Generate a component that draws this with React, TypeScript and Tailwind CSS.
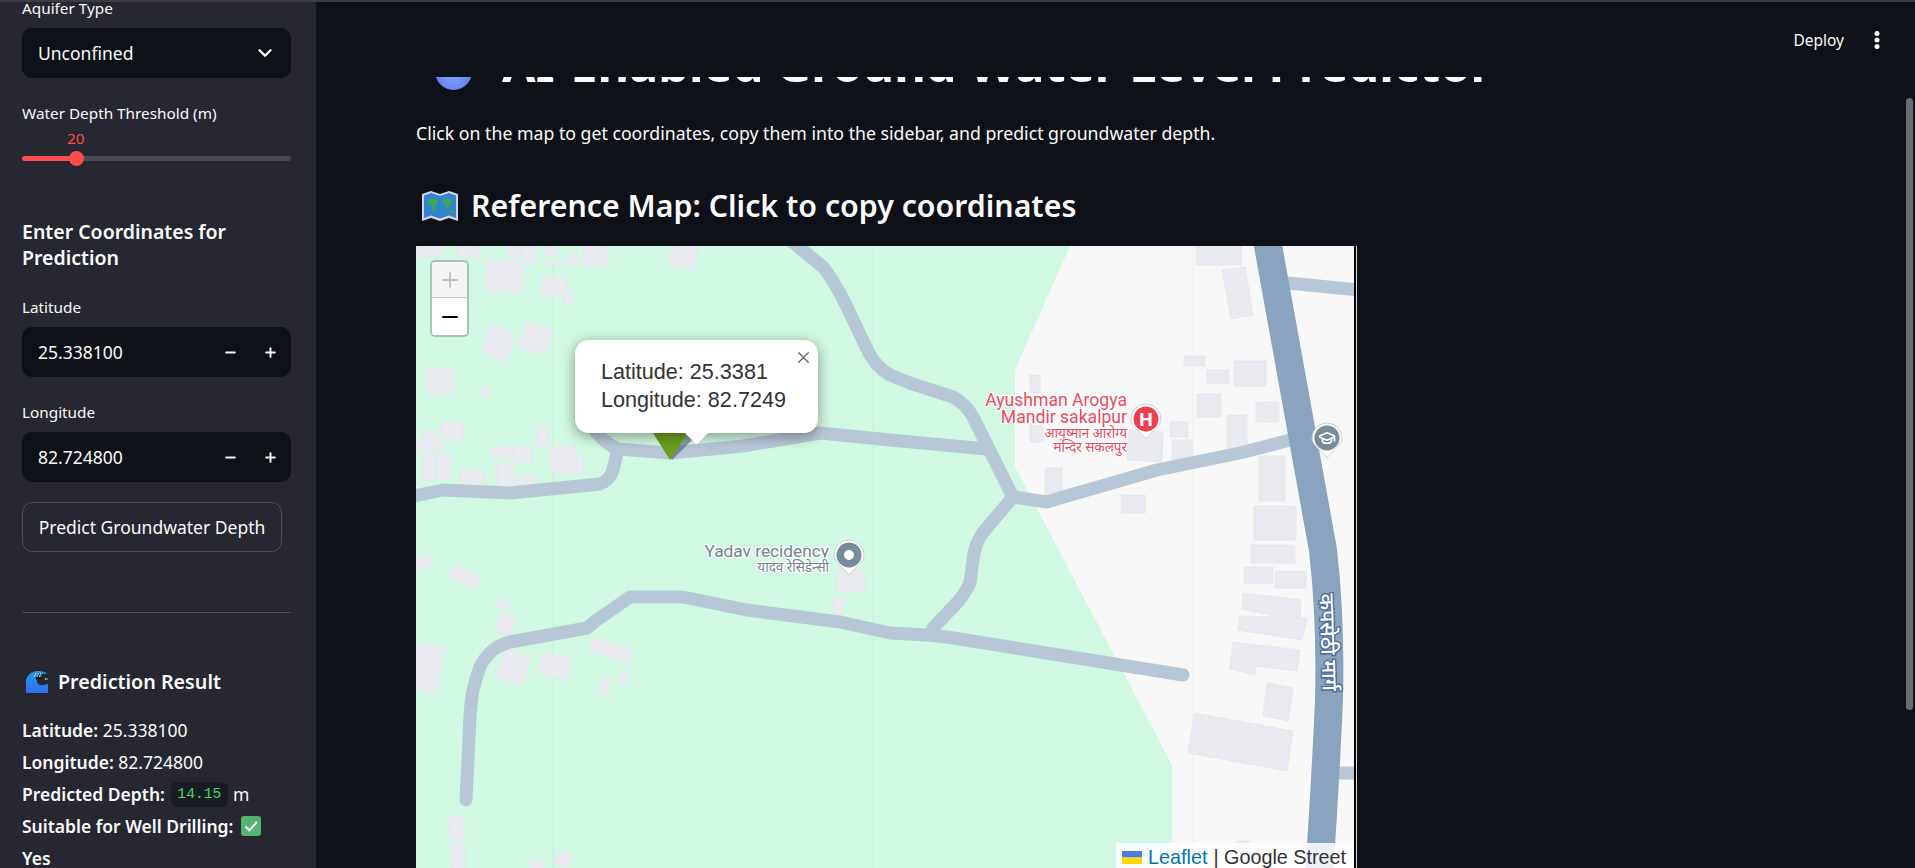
import { ChevronDown, GraduationCap, Minus, Plus, X } from "lucide-react";

// map drawing uses page coordinates through the viewBox, so the values read off the screenshot go in as they are
const rect = (x1: number, x2: number, y1: number, y2: number) =>
  `${x1},${y1} ${x2},${y1} ${x2},${y2} ${x1},${y2}`;

const buildings = [
  rect(416, 443, 246, 257),
  rect(457, 480, 246, 258),
  rect(507, 520, 246, 258),
  rect(523, 536, 246, 263),
  rect(545, 557, 246, 256),
  rect(545, 565, 260, 265),
  rect(568, 578, 253, 265),
  rect(583, 608, 246, 267),
  "672,246 698,246 694,270 668,265",
  rect(486, 523, 260, 292),
  rect(541, 567, 277, 296),
  rect(564, 573, 292, 305),
  "490,323 515,335 505,365 481,350",
  "527,322 553,330 545,355 518,347",
  rect(427, 454, 369, 395),
  "483,387 492,392 489,398 478,393",
  rect(441, 463, 422, 440),
  rect(423, 437, 430, 440),
  rect(416, 442, 440, 450),
  rect(423, 434, 452, 480),
  rect(436, 451, 453, 479),
  rect(460, 484, 470, 485),
  rect(491, 514, 446, 458),
  rect(514, 532, 446, 463),
  rect(497, 514, 463, 487),
  rect(516, 538, 476, 485),
  rect(537, 548, 426, 447),
  rect(550, 576, 446, 473),
  rect(576, 583, 457, 474),
  rect(1196, 1241, 246, 265),
  "1222,270 1245,267 1253,315 1231,319",
  rect(1184, 1205, 356, 366),
  rect(1207, 1229, 370, 383),
  rect(1234, 1266, 361, 386),
  rect(1197, 1221, 394, 417),
  rect(1256, 1279, 402, 422),
  rect(1227, 1247, 415, 450),
  rect(1030, 1040, 375, 393),
  rect(1030, 1043, 425, 442),
  "1129,430 1163,432 1162,462 1127,460",
  rect(1170, 1188, 422, 437),
  rect(1172, 1192, 440, 460),
  rect(1045, 1062, 468, 497),
  rect(1121, 1145, 495, 513),
  rect(1259, 1285, 456, 501),
  rect(1254, 1296, 506, 540),
  rect(1251, 1295, 545, 563),
  rect(1244, 1273, 567, 583),
  rect(1275, 1306, 571, 588),
  "1243,593 1301,600 1300,622 1242,609",
  "1240,616 1307,618 1302,640 1238,630",
  "1233,642 1300,650 1297,671 1256,666 1255,675 1230,669",
  "1267,683 1293,688 1288,721 1263,716",
  "1195,713 1293,731 1287,771 1188,753",
  rect(416, 430, 557, 568),
  "453,566 480,575 476,589 449,578",
  "498,598 511,603 507,610 495,605",
  "500,612 516,616 510,636 495,632",
  "416,643 446,648 435,695 416,690",
  "505,649 531,656 522,685 496,677",
  "543,651 572,658 567,680 537,673",
  "592,637 632,650 628,663 588,650",
  rect(600, 610, 678, 694),
  "621,671 628,672 625,686 618,684",
  rect(449, 464, 817, 840),
  rect(451, 465, 843, 868),
  rect(530, 544, 860, 868),
  "557,852 571,854 569,867 556,866",
  rect(836, 865, 570, 591),
  rect(833, 843, 598, 615),
  rect(1237, 1249, 841, 848),
];

const roads = [
  "M410 497 L443 490 L510 493 L600 484 Q610 480 613 470 L618 449",
  "M596 432 Q606 444 618 449 L670 453 L743 446 L820 433 L890 440 L987 449",
  "M790 240 L823 267 Q835 282 847 307 L866 347 Q874 366 890 375 L910 383 L953 397 Q966 404 973 417 L1013 497",
  "M1013 497 L1047 502 L1060 498 L1157 470 L1240 453 L1290 440",
  "M1013 497 L985 530 Q975 542 973 560 L970 583 Q964 596 953 607 L933 628",
  "M466 800 L470 717 Q471 700 473 690 Q476 678 480 667 Q484 658 493 650 Q500 645 510 642 L587 628 Q596 620 607 613 L630 597 L683 597 L747 610 L840 622 L890 633 L927 635 L947 637 L1183 675",
  "M1288 283 L1360 290",
  "M1337 773 L1360 773",
];

const Drop = () => (
  <svg width="37" height="50" viewBox="0 0 37 50" className="shrink-0">
    <defs>
      <radialGradient id="drop" cx="0.5" cy="0.6" r="0.6">
        <stop offset="0" stopColor="#80b0ff" />
        <stop offset="1" stopColor="#6076f0" />
      </radialGradient>
    </defs>
    <path d="M18.5 0C24 9 37 21 37 31.5A18.5 18.5 0 0 1 0 31.5C0 21 13 9 18.5 0Z" fill="url(#drop)" />
  </svg>
);

const MapEmoji = () => (
  <svg width="36" height="30" viewBox="0 0 36 30" className="shrink-0">
    <path d="M0 3l9-3 9 3 9-3 9 3v27l-9-3-9 3-9-3-9 3z" fill="#d5d3e8" />
    <path d="M2 4.500l7-2.500 9 3 9-3 7 2.500v22.500l-7-2.500-9 3-9-3-7 2.500z" fill="#2e86d0" />
    <path d="M6 9l7-2 3 4-3 5 2 5-4-1-1-5-4-2zM21 7l7 1 3 4-3 2-2 5-3-2 1-4-4-2zM28 20l3-1 1 3-3 1z" fill="#3fa55b" />
  </svg>
);

const WaveEmoji = () => (
  <svg width="22" height="22" viewBox="0 0 22 22" className="shrink-0">
    <defs>
      <linearGradient id="wave" x1="0" y1="0" x2="0" y2="1">
        <stop offset="0" stopColor="#1f9be8" />
        <stop offset="1" stopColor="#2f6ff0" />
      </linearGradient>
    </defs>
    <path d="M0 22V11C0 4 6 0 12 0c4 0 8 1 9 3-5-1-9 1-10 5-1 4 2 7 6 6l5-1v9z" fill="url(#wave)" />
    <circle cx="13" cy="6" r="3.500" fill="#10202f" />
    <path d="M8 5h8M9 3h6M19 8h3" stroke="#cfe6f7" strokeWidth="1.500" strokeDasharray="1.500 1" />
  </svg>
);

const CheckEmoji = () => (
  <svg width="20" height="20" viewBox="0 0 20 20" className="shrink-0">
    <rect width="20" height="20" rx="3" fill="#53b36f" />
    <path d="M4.500 10.500l3.800 3.800 7.500-8.300" fill="none" stroke="#fff" strokeWidth="2" />
  </svg>
);

const NumberInput = ({ value }: { value: string }) => (
  <div className="mt-[10px] flex h-[50px] items-center rounded-[10px] bg-[#0e1117] pl-4 pr-[13px] text-[17.500px] text-[#fafafa]">
    <span className="flex-1">{value}</span>
    <Minus size={15} strokeWidth={3} className="mr-[25px]" />
    <Plus size={15} strokeWidth={3} />
  </div>
);

const MapPin = ({ x, y, fill }: { x: number; y: number; fill: string }) => (
  <g>
    <path
      d={`M${x - 15} ${y}a15 15 0 0 1 30 0c0 7-9 12-15 20c-6-8-15-13-15-20z`}
      fill="#fff"
      stroke="#c9ced3"
      strokeWidth="1"
    />
    <circle cx={x} cy={y} r="12.500" fill={fill} />
  </g>
);

const MapView = () => (
  <div className="relative h-[622px] w-[938px] shrink-0 overflow-hidden bg-[#f8f8f8]">
    <svg width="938" height="622" viewBox="416 246 938 622" className="block">
      <polygon points="416,246 1070,246 1015,370 1015,467 1172,765 1172,868 416,868" fill="#d1f8e2" />
      <path d="M553 246V868M1193 246V868M873 246V868" stroke="#8a9a9a" strokeOpacity="0.1" />
      {buildings.map((points) => (
        <polygon key={points} points={points} fill="#e8eaef" stroke="#e2e4ea" strokeWidth="0.800" />
      ))}
      {roads.map((d) => (
        <path key={d} d={d} fill="none" stroke="#b8c7d6" strokeWidth="13" strokeLinecap="round" strokeLinejoin="round" />
      ))}
      <path
        d="M1267 240L1323 550Q1331 620 1329 700Q1325 790 1319 875"
        fill="none"
        stroke="#8aa4c0"
        strokeWidth="28"
      />
      <path d="M672 460L694 438L686 433L668 452Z" fill="#33424f" fillOpacity="0.5" />
      <path d="M653 433H687L670 460Z" fill="#6a9f1e" />
      <g fontFamily="Roboto, 'Noto Sans', sans-serif" textAnchor="end" paintOrder="stroke" stroke="#fff" strokeWidth="2.500" strokeLinejoin="round">
        <g fill="#e94c5e">
          <text x="1127" y="406" fontSize="17.600">Ayushman Arogya</text>
          <text x="1127" y="423" fontSize="17.600">Mandir sakalpur</text>
          <text x="1127" y="438" fontSize="13.500">आयुष्मान आरोग्य</text>
          <text x="1127" y="452" fontSize="13.500">मन्दिर सकलपुर</text>
        </g>
        <g fill="#74858f">
          <text x="829" y="557" fontSize="17.300">Yadav recidency</text>
          <text x="829" y="572" fontSize="13.500">यादव रेसिडेन्सी</text>
        </g>
      </g>
      <MapPin x={1146} y={419} fill="#ee3f51" />
      <text x="1146" y="426" textAnchor="middle" fontSize="19" fontWeight="700" fontFamily="Roboto, sans-serif" fill="#fff">
        H
      </text>
      <MapPin x={1327} y={438} fill="#788d99" />
      <GraduationCap x={1318} y={429} width={18} height={18} stroke="#fff" strokeWidth={2.200} />
      <MapPin x={849} y={555} fill="#788d99" />
      <circle cx="849" cy="555" r="5" fill="#fff" />
      <text
        transform="translate(1332 642) rotate(88)"
        textAnchor="middle"
        y="11"
        fontSize="21"
        fontWeight="500"
        fontFamily="'Noto Sans', sans-serif"
        fill="#fff"
        stroke="#4f7099"
        strokeWidth="3"
        paintOrder="stroke"
      >
        कपसेठी मार्ग
      </text>
    </svg>

    <div className="absolute left-[14px] top-[14px] w-[39px] overflow-hidden rounded-[5px] border-2 border-[#a5c4b4]">
      <div className="flex h-[36px] items-center justify-center border-b border-[#c8c8c8] bg-[#f4f4f4] text-[#bbbbbb]">
        <Plus size={24} strokeWidth={1.800} />
      </div>
      <div className="flex h-[37px] items-center justify-center bg-white text-black">
        <Minus size={24} strokeWidth={2} />
      </div>
    </div>

    <div className="absolute left-[159px] top-[94px] h-[93px] w-[243px] rounded-[14px] bg-white shadow-[0_3px_14px_rgba(0,0,0,0.4)]">
      <div className="absolute left-[113px] top-[84px] h-[17px] w-[17px] rotate-45 bg-white" />
      <div className="relative pl-[26px] pt-[18px] font-['Liberation_Sans',sans-serif] text-[21.600px] leading-[28px] text-[#333333]">
        <div>Latitude: 25.3381</div>
        <div>Longitude: 82.7249</div>
      </div>
      <X size={19} strokeWidth={1.700} className="absolute right-[5px] top-[8px] text-[#666666]" />
    </div>

    <div className="absolute bottom-0 right-0 flex h-[25px] w-[238px] items-center bg-white/85 pl-[6px] pt-[4px] font-['Liberation_Sans',sans-serif] text-[19.800px] text-[#333333]">
      <svg width="20" height="13" viewBox="0 0 20 13" className="mr-[6px] shrink-0">
        <rect width="20" height="6.500" fill="#4c7be1" />
        <rect y="6.500" width="20" height="6.500" fill="#ffd500" />
      </svg>
      <span className="text-[#0078a8]">Leaflet</span>
      <span className="ml-[6px]">| Google Street</span>
    </div>
  </div>
);

const Sidebar = () => (
  <aside className="w-[316px] shrink-0 bg-[#262730] pl-[22px] pr-[25px] text-[#fafafa]">
    <div className="-mt-[4px] text-[15.300px] leading-[20px]">Aquifer Type</div>
    <div className="mt-[10px] flex h-[50px] items-center justify-between rounded-[10px] bg-[#0e1117] pl-4 pr-[15px] text-[17.500px]">
      <span>Unconfined</span>
      <ChevronDown size={22} strokeWidth={2.600} />
    </div>

    <div className="mt-[25px] text-[15.300px] leading-[20px]">Water Depth Threshold (m)</div>
    <div className="ml-[45px] mt-[5px] text-[15.300px] leading-[20px] text-[#ff4b4b]">20</div>
    <div className="relative mt-[8px] h-[5px] rounded-full bg-[#484953]">
      <div className="h-full w-[54px] rounded-full bg-[#ff4b4b]" />
      <div className="absolute left-[47px] top-[-5px] h-[15px] w-[15px] rounded-full bg-[#ff4b4b]" />
    </div>

    <h3 className="mt-[58px] text-[19.500px] font-semibold leading-[26px]">Enter Coordinates for Prediction</h3>

    <div className="mt-[26px] text-[15.300px] leading-[20px]">Latitude</div>
    <NumberInput value="25.338100" />
    <div className="mt-[25px] text-[15.300px] leading-[20px]">Longitude</div>
    <NumberInput value="82.724800" />

    <div className="mt-[20px] flex h-[50px] w-[260px] items-center justify-center rounded-[10px] border border-[#4f505a] text-[17.500px]">
      Predict Groundwater Depth
    </div>

    <div className="mt-[60px] h-px bg-[#4a4b55]" />

    <div className="ml-[4px] mt-[54px] flex h-[30px] items-center gap-[10px]">
      <WaveEmoji />
      <span className="text-[19.700px] font-semibold">Prediction Result</span>
    </div>

    <div className="mt-[17px] text-[17.500px] leading-[32px]">
      <div>
        <b className="font-semibold">Latitude:</b> 25.338100
      </div>
      <div>
        <b className="font-semibold">Longitude:</b> 82.724800
      </div>
      <div className="flex items-center">
        <b className="font-semibold">Predicted Depth:</b>
        <code className="ml-[6px] flex h-[25px] w-[57px] items-center justify-center rounded-[6px] bg-[#1a1c24] font-['Liberation_Mono',monospace] text-[14.700px] text-[#3dd56d]">
          14.15
        </code>
        <span className="ml-[5px]">m</span>
      </div>
      <div className="flex items-center gap-[8px]">
        <b className="font-semibold">Suitable for Well Drilling:</b>
        <CheckEmoji />
      </div>
      <div>
        <b className="font-semibold">Yes</b>
      </div>
    </div>
  </aside>
);

export default function App() {
  return (
    <div className="flex h-[868px] w-full flex-col overflow-hidden bg-[#0e1117] font-['Noto_Sans',sans-serif]">
      <div className="h-[2px] shrink-0 bg-[#3c3d42]" />
      <div className="flex min-h-0 flex-1">
        <Sidebar />
        <main className="relative min-w-0 flex-1 text-[#fafafa]">
          <header className="flex h-[75px] items-start justify-end pr-[35px] pt-[27px]">
            <span className="text-[15.500px] leading-[22px]">Deploy</span>
            <svg width="6" height="20" viewBox="0 0 6 20" className="ml-[30px] mt-px fill-[#fafafa]">
              <circle cx="3" cy="3.500" r="2.500" />
              <circle cx="3" cy="10" r="2.500" />
              <circle cx="3" cy="16.500" r="2.500" />
            </svg>
          </header>

          <div className="h-[13px] overflow-hidden pl-[100px]">
            <div className="-mt-[60px] flex h-[73px] items-end">
              <div className="ml-[19px]">
                <Drop />
              </div>
              <h1 className="ml-[30px] mb-[-3px] whitespace-nowrap text-[48.700px] font-bold leading-[60px]">
                AI-Enabled Ground Water Level Predictor
              </h1>
            </div>
          </div>

          <div className="pl-[100px]">
            <p className="mt-[30px] text-[17.700px] leading-[26px]">
              Click on the map to get coordinates, copy them into the sidebar, and predict groundwater depth.
            </p>
            <h2 className="mt-[38px] flex items-center text-[30.300px] font-semibold leading-[44px]">
              <span className="ml-[6px] mr-[13px]">
                <MapEmoji />
              </span>
              Reference Map: Click to copy coordinates
            </h2>
            <div className="mt-[18px] flex">
              <MapView />
              <div className="h-[622px] w-[2px] bg-black" />
              <div className="h-[622px] w-px bg-[#dddddd]" />
            </div>
          </div>

          <div className="absolute right-[2px] top-[96px] h-[612px] w-[7px] rounded-full bg-[#6b6c71]" />
        </main>
      </div>
    </div>
  );
}
